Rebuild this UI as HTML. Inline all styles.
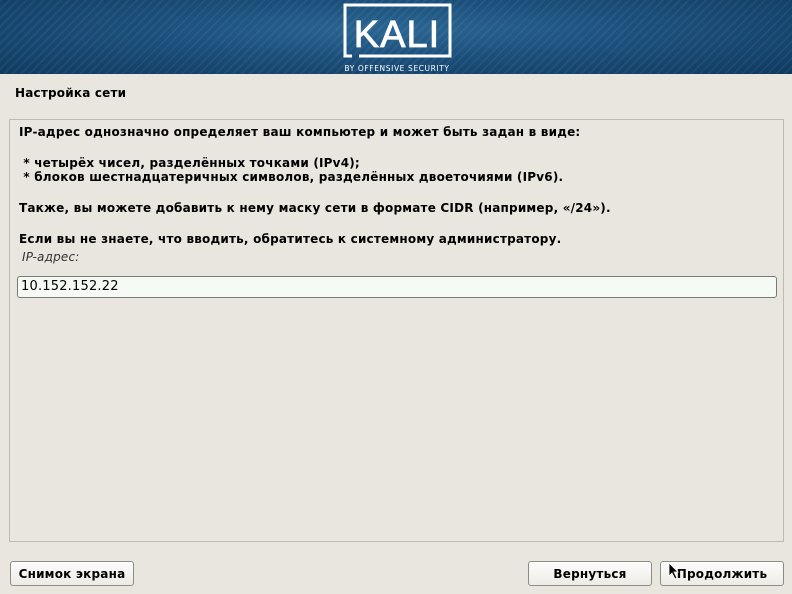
<!DOCTYPE html>
<html><head><meta charset="utf-8"><style>
body{margin:0;width:792px;height:594px;background:#e8e6df;font-family:"DejaVu Sans","Liberation Sans",sans-serif;position:relative;overflow:hidden;color:#000}
.hdr{position:absolute;left:0;top:0;width:792px;height:74px;background:radial-gradient(ellipse at 50% 40%,#2a6592 0%,#1b4f7b 45%,#0f3a60 100%)}
.hdr:after{content:"";position:absolute;inset:0;background:repeating-linear-gradient(135deg,rgba(255,255,255,0.05) 0 2px,transparent 2px 6px)}
.title{position:absolute;left:15px;top:86px;font-size:12px;font-weight:bold;letter-spacing:0.2px}
.panel{position:absolute;left:9px;top:119px;width:773px;height:421px;border:1px solid #bdbab2}
.t{position:absolute;left:19px;font-size:12px;font-weight:bold;white-space:pre;letter-spacing:0.2px}
.inp{position:absolute;left:17px;top:276px;border:1px solid #7a7a72;border-radius:3px;background:#f6faf5;font-size:13px;line-height:20px;padding-left:3px;box-sizing:border-box;width:760px;height:22px;letter-spacing:0.2px}
.btn{position:absolute;top:561px;height:25px;border:1px solid #8f8c84;border-radius:3px;background:linear-gradient(#fdfdfc,#ecebe6);font-size:12px;font-weight:bold;text-align:center;line-height:24px;box-sizing:border-box;letter-spacing:0.2px}
</style></head><body>
<div class="hdr">
<svg style="position:absolute;left:0;top:0;z-index:1" width="792" height="74">
<path d="M352 56 H345 V5 H450 V56 H359" fill="none" stroke="#fff" stroke-width="3"/>
<text x="397" y="47" fill="#fff" font-family="Liberation Sans,sans-serif" font-size="38" text-anchor="middle" letter-spacing="1" stroke="#fff" stroke-width="0.8">KALI</text>
<text x="397" y="71" fill="#fff" font-family="DejaVu Sans,sans-serif" font-size="7.5" text-anchor="middle" letter-spacing="0.6">BY OFFENSIVE SECURITY</text>
</svg></div>
<div class="title">Настройка сети</div>
<div class="panel"></div>
<div class="t" style="top:125px">IP-адрес однозначно определяет ваш компьютер и может быть задан в виде:</div>
<div class="t" style="top:156px"> * четырёх чисел, разделённых точками (IPv4);
 * блоков шестнадцатеричных символов, разделённых двоеточиями (IPv6).</div>
<div class="t" style="top:201px">Также, вы можете добавить к нему маску сети в формате CIDR (например, «/24»).</div>
<div class="t" style="top:232px">Если вы не знаете, что вводить, обратитесь к системному администратору.</div>
<div class="t" style="top:250px;font-weight:normal;font-style:italic;left:22px;font-size:12px;color:#333">IP-адрес:</div>
<div class="inp">10.152.152.22</div>
<div class="btn" style="left:10px;width:124px">Снимок экрана</div>
<div class="btn" style="left:528px;width:124px">Вернуться</div>
<div class="btn" style="left:660px;width:124px">Продолжить</div>
<svg style="position:absolute;left:668px;top:562px" width="12" height="18"><path d="M1 1 V14 L4 11 L7 17 L9 16 L6 10 H10 Z" fill="#000" stroke="#fff" stroke-width="0.8"/></svg>
</body></html>
